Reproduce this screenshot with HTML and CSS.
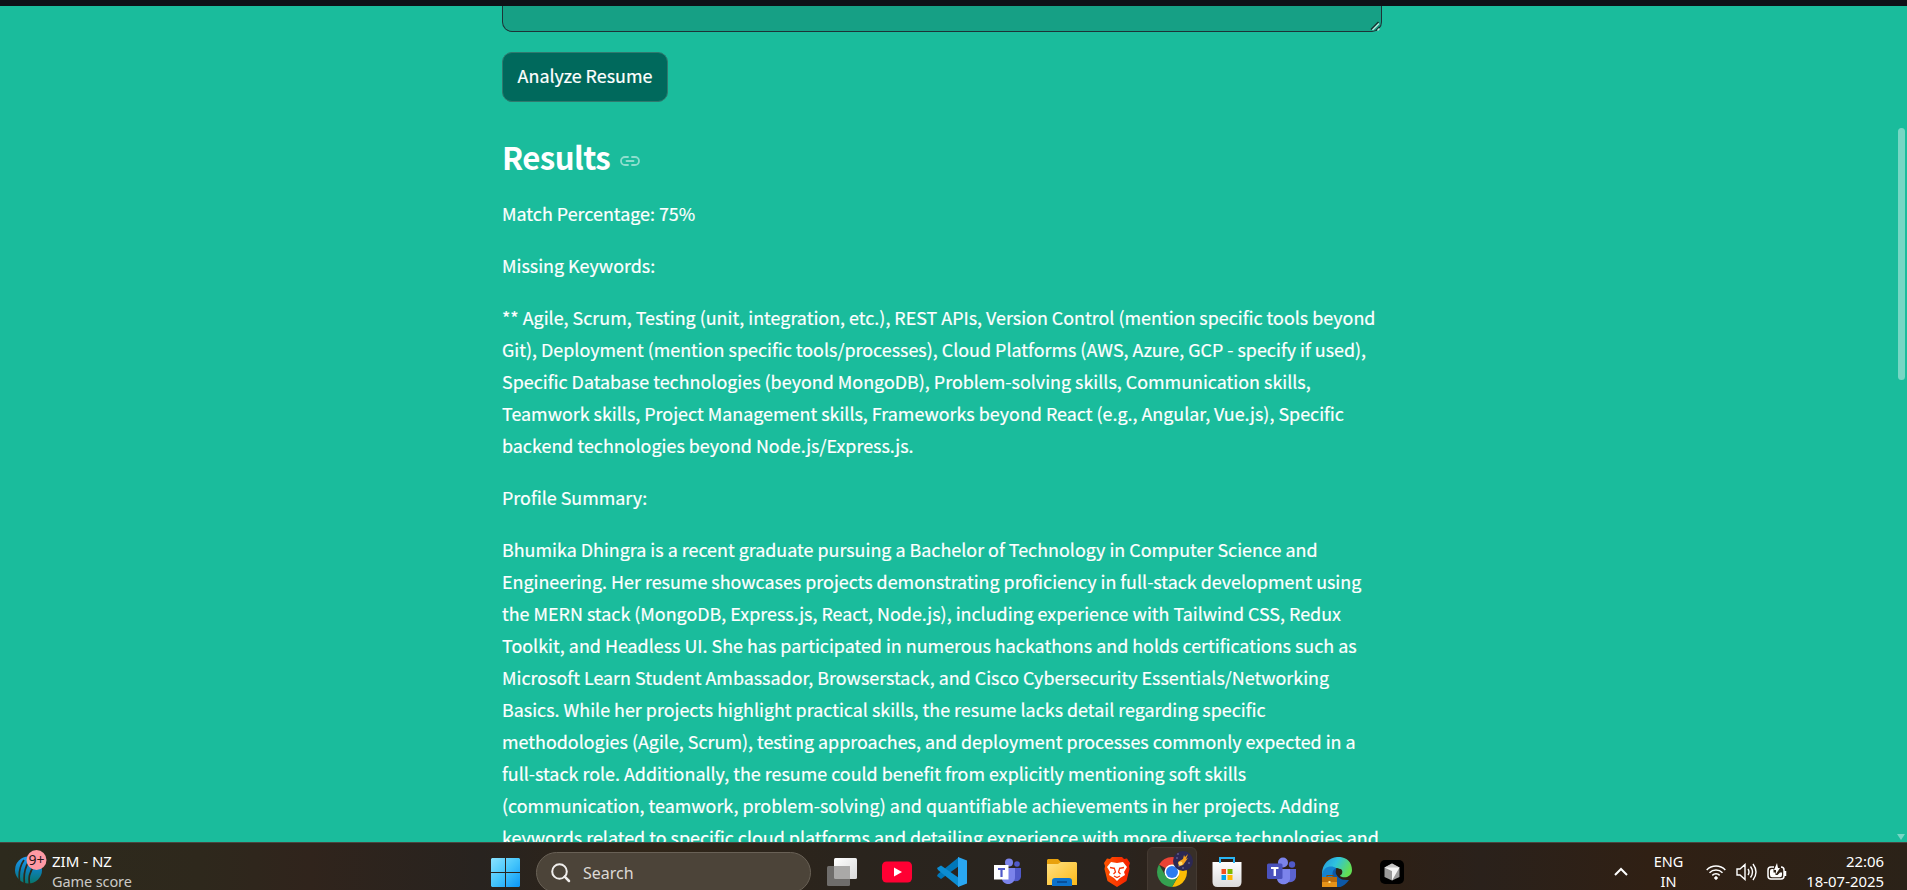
FILE: index.html
```html
<!DOCTYPE html>
<html lang="en">
<head>
<meta charset="utf-8">
<title>Resume Analyzer</title>
<link rel="stylesheet" href="styles.css">
</head>
<body>
<div class="screen">
  <header class="app-header"></header>
  <main class="page">
    <div class="column">
      <div class="textarea">
        <svg class="grip" width="10" height="10" viewBox="0 0 10 10"><path d="M1 8.5 8.5 1M6 9.5 9.5 6" stroke="#16302f" stroke-width="1.5"/><path d="M2.5 9 9 2.5M7.5 9.5 9.5 7.5" stroke="#b5e3d8" stroke-width="1.5"/></svg>
      </div>
      <button class="analyze">Analyze Resume</button>
      <h2 class="heading"><span>Results</span>
        <svg width="20" height="10" viewBox="0 0 20 10" fill="none" stroke="#8edecd" stroke-width="1.8" stroke-linecap="round"><path d="M8 1H5a4 4 0 0 0 0 8h3M12 1h3a4 4 0 0 1 0 8h-3M6.500 5h7"/></svg>
      </h2>
      <div class="prose">
        <p>Match Percentage: 75%</p>
        <p>Missing Keywords:</p>
        <p>** Agile, Scrum, Testing (unit, integration, etc.), REST APIs, Version Control (mention specific tools beyond<br>Git), Deployment (mention specific tools/processes), Cloud Platforms (AWS, Azure, GCP - specify if used),<br>Specific Database technologies (beyond MongoDB), Problem-solving skills, Communication skills,<br>Teamwork skills, Project Management skills, Frameworks beyond React (e.g., Angular, Vue.js), Specific<br>backend technologies beyond Node.js/Express.js.</p>
        <p>Profile Summary:</p>
        <p>Bhumika Dhingra is a recent graduate pursuing a Bachelor of Technology in Computer Science and<br>Engineering. Her resume showcases projects demonstrating proficiency in full-stack development using<br>the MERN stack (MongoDB, Express.js, React, Node.js), including experience with Tailwind CSS, Redux<br>Toolkit, and Headless UI. She has participated in numerous hackathons and holds certifications such as<br>Microsoft Learn Student Ambassador, Browserstack, and Cisco Cybersecurity Essentials/Networking<br>Basics. While her projects highlight practical skills, the resume lacks detail regarding specific<br>methodologies (Agile, Scrum), testing approaches, and deployment processes commonly expected in a<br>full-stack role. Additionally, the resume could benefit from explicitly mentioning soft skills<br>(communication, teamwork, problem-solving) and quantifiable achievements in her projects. Adding<br>keywords related to specific cloud platforms and detailing experience with more diverse technologies and</p>
      </div>
    </div>
    <div class="scroll-thumb"></div>
    <div class="scroll-down"></div>
  </main>

  <footer class="taskbar">
    <div class="widget">
      <svg width="34" height="38" viewBox="0 0 34 38">
        <defs><linearGradient id="ball" x1="0" y1="0" x2="0" y2="1"><stop offset="0" stop-color="#1e9bf0"/><stop offset=".5" stop-color="#0d80b8"/><stop offset="1" stop-color="#08766a"/></linearGradient></defs>
        <circle cx="14.500" cy="21" r="13.500" fill="url(#ball)"/>
        <path d="M10 11C5 18 4 25 6 36M15 12c-5 8-6 16-4 26M21 16c-6 7-7 13-5 22" fill="none" stroke="#2d2a1d" stroke-width="1.700"/>
        <circle cx="22.500" cy="11" r="10" fill="#ff99a4"/>
        <text class="badge-text" x="22.500" y="16" text-anchor="middle">9+</text>
      </svg>
      <div class="widget-text"><span>ZIM - NZ</span><span class="dim">Game score</span></div>
    </div>

    <div class="start">
      <svg width="29" height="29" viewBox="0 0 29 29">
        <defs><linearGradient id="win" gradientUnits="userSpaceOnUse" x1="0" y1="0" x2="29" y2="29"><stop offset="0" stop-color="#8be2ff"/><stop offset=".5" stop-color="#45c5fb"/><stop offset="1" stop-color="#0a96f8"/></linearGradient></defs>
        <path fill="url(#win)" d="M1 0h13v14H0V1zM15 0h13l1 1v13H15zM0 15h14v14H1l-1-1zM15 15h14v13l-1 1H15z"/>
      </svg>
    </div>

    <div class="search">
      <svg width="20" height="20" viewBox="0 0 20 20" fill="none" stroke="#f0eeec" stroke-width="2"><circle cx="8.500" cy="8.500" r="7.300"/><path d="m13.700 13.700 4.300 4.300" stroke-width="2.500" stroke-linecap="round"/></svg>
      <span>Search</span>
    </div>

    <div class="apps">
      <div class="app"><svg width="30" height="30" viewBox="0 0 30 30"><defs><linearGradient id="tv" x1="0" y1="0" x2="1" y2="1"><stop stop-color="#fff"/><stop offset="1" stop-color="#d9d9d9"/></linearGradient></defs><rect x="7" y="1" width="23" height="21" rx="1.500" fill="url(#tv)"/><rect x="0" y="9" width="23" height="20" rx="1.500" fill="#6f6d6b"/><path d="M7 9h15q1 0 1 1v12H8.500Q7 22 7 20.500z" fill="#aaa9a8"/></svg></div>
      <div class="app"><svg width="30" height="30" viewBox="0 0 30 30"><rect y="4.500" width="30" height="21" rx="4.500" fill="#ff0033"/><path d="m12 10.500 8 4.500-8 4.500z" fill="#fff"/></svg></div>
      <div class="app"><svg width="30" height="30" viewBox="0 0 30 30"><path d="M22 0v9L4 22l-4-3 1-2z" fill="#0077b9"/><path d="M22 30v-9L4 8.500 0 11l1 2z" fill="#0c8dd2"/><path d="m21 0 9 3.500v23L21 30z" fill="#2aa7f2"/></svg></div>
      <div class="app"><svg width="28" height="28" viewBox="0 0 28 28"><circle cx="24" cy="6" r="2.800" fill="#5059c9"/><path d="M19 10h9v9q-1 5-7 4z" fill="#5059c9"/><circle cx="16" cy="4.500" r="4" fill="#7b83eb"/><path d="M10 10h12v9c0 9-12 9-13 2z" fill="#7b83eb"/><rect x="1" y="7" width="14.500" height="14.500" fill="#fff"/><path d="M5 10h7v2H9.600v7H7.400v-7H5z" fill="#5059c9"/></svg></div>
      <div class="app"><svg width="30" height="28" viewBox="0 0 30 28"><defs><linearGradient id="fold" x1="0" y1="0" x2="1" y2="1"><stop stop-color="#ffe183"/><stop offset="1" stop-color="#fcb918"/></linearGradient></defs><path d="M1 1h10l3 3h15v9H0V2z" fill="#e8a10d"/><path d="M0 6h11l3-2h15l1 1v22H0z" fill="url(#fold)"/><path d="M5 28v-5q0-3 3-3h14q3 0 3 3v5z" fill="#0c72cc"/><path d="M10 24h10" stroke="#06448a" stroke-width="1.500"/></svg></div>
      <div class="app"><svg width="26" height="30" viewBox="0 0 26 30"><defs><linearGradient id="brave" x1="0" y1="0" x2="1" y2="0"><stop stop-color="#ff5500"/><stop offset="1" stop-color="#f51d00"/></linearGradient></defs><path d="M8 0h10l2 2 3-.5L26 6l-1 3 .5 3-3 12-9.500 6-9.500-6L.5 12 1 9 0 6l3-4.500L6 2z" fill="url(#brave)"/><path d="m7 5 6 1 6-1 4 5-3 5 1 3-5 3-3 3-3-3-5-3 1-3-3-5z" fill="#fff"/><path d="m6 10.500 5 1M20 10.500l-5 1M10.500 12l1 3-2 2M15.500 12l-1 3 2 2M10 19l3 1.500 3-1.500" fill="none" stroke="#fa3608" stroke-width="1.300"/></svg></div>
      <div class="app active"><svg class="chrome" width="36" height="36" viewBox="0 0 36 36"><path d="M15 21 2.010 13.500A15 15 0 0 1 27.990 13.500L15 13.500z" fill="#ea4335"/><path d="M27.990 13.500A15 15 0 0 1 15 36L21.500 24.750 15 13.500z" fill="#fbbc04"/><path d="M2.010 13.500A15 15 0 0 0 15 36L21.500 24.750 15 28.500 8.500 24.750z" fill="#34a050"/><circle cx="15" cy="21" r="7.500" fill="#fff"/><circle cx="15" cy="21" r="6" fill="#2d7cf0"/><circle cx="26" cy="10" r="10" fill="#2c2853"/><path d="M19 7h2M21 15h2M31 12h2M20 3h2M25 17h2" stroke="#7771a2"/><path d="m22 15-1-4 5-3 1-4 1 2 3-3-2 5 2-1-5 7z" fill="#f5a11a"/><circle cx="23.500" cy="12.500" r="2" fill="#ffdc70"/></svg></div>
      <div class="app"><svg width="30" height="30" viewBox="0 0 30 30"><defs><linearGradient id="bag" x1="0" y1="0" x2="0" y2="1"><stop stop-color="#fff"/><stop offset="1" stop-color="#dcdcdc"/></linearGradient></defs><path d="M.5 5h29v20q0 5-5 5h-19q-5 0-5-5z" fill="url(#bag)"/><path d="M8 6V1h14v5" fill="none" stroke="#29b5f4" stroke-width="2"/><path d="M9.500 12H14v5H9.500z" fill="#f25022"/><path d="M15.500 12h5v5h-5z" fill="#7fba00"/><path d="M9.500 18H14v5H9.500z" fill="#00a4ef"/><path d="M15.500 18h5v5h-5z" fill="#ffb900"/></svg></div>
      <div class="app"><svg width="30" height="30" viewBox="0 0 30 30"><circle cx="25" cy="7.500" r="3.200" fill="#5059c9"/><path d="M20 12h9v8q-1 6-8 5z" fill="#5b63cf"/><circle cx="16" cy="5.500" r="5" fill="#7b83eb"/><path d="M12 12h11v10c-1 7-12 7-13 0z" fill="#7b83eb"/><rect x="0" y="6.500" width="15.500" height="15.500" rx="1.500" fill="#4a52bd"/><path d="M4 10h7.500v2H9v7H6.600v-7H4z" fill="#fff"/></svg></div>
      <div class="app"><svg width="30" height="30" viewBox="0 0 30 30"><defs><linearGradient id="edge" x1="0" y1="0" x2="1" y2=".4"><stop stop-color="#2394dc"/><stop offset=".5" stop-color="#2fc2df"/><stop offset="1" stop-color="#62de54"/></linearGradient></defs><path d="M15 8c-3 10 1 16 12 15C17 37 0 31 0 15z" fill="#0d58a6"/><path d="M0 17C0-4 30-6 30 13c0 7-8 9-12 6 3-4 0-8-4-8C7 10 0 14 0 20z" fill="url(#edge)"/><path d="M0 18c1-9 10-10 14-7-5 3-4 8-1 11L0 25z" fill="#1482cf"/><rect x="5" y="18.500" width="6" height="3" fill="none" stroke="#8e4900"/><path d="M0 20h15v10H0z" fill="#e69319"/><path d="M0 20h15v5H0z" fill="#b96a0b"/><path d="M6.500 24h2v2h-2z" fill="#ffe38c"/><circle cx="17" cy="15" r="3.300" fill="#2e2015"/></svg></div>
      <div class="app"><svg width="24" height="24" viewBox="0 0 24 24"><rect width="24" height="24" rx="5" fill="#000"/><path d="m12 3.500 7.500 4v9.500L12 20.500 4.500 17V7.500z" fill="#999"/><path d="m12 3.500 7.500 4L12 11 4.500 7.500z" fill="#c4c4c4"/><path d="M19.500 7.500 12 20.500V11L4.500 7.500z" fill="#f4f4f4"/></svg></div>
    </div>

    <div class="tray">
      <svg class="chevron" width="14" height="9" viewBox="0 0 14 9" fill="none" stroke="#fff" stroke-width="2"><path d="m1 8 6-6 6 6"/></svg>
      <div class="lang"><span>ENG</span><span>IN</span></div>
      <div class="status">
        <svg width="20" height="16" viewBox="0 0 20 16" fill="none" stroke="#fff" stroke-width="1.500"><path d="M.700 6a13 13 0 0 1 18.600 0M3.500 8.700a9.200 9.200 0 0 1 13 0M6.300 11.400a5.200 5.200 0 0 1 7.400 0"/><circle cx="10" cy="14" r="1.300" fill="#fff" stroke-width="1"/></svg>
        <svg width="21" height="18" viewBox="0 0 21 18" fill="none" stroke="#fff" stroke-width="1.400"><path d="M1 6h3l5-4.500v15L4 12H1zM12 6q2 3 0 6M14.500 3.500q4 5.500 0 11M17 1q6 8 0 16"/></svg>
        <svg width="20" height="18" viewBox="0 0 20 18" fill="none" stroke="#fff" stroke-width="1.500"><path d="M7 4H4Q1 4 1 7v6q0 3 3 3h10q3 0 3-3V7q0-3-3-3M18.500 8v5"/><path d="M3 8q0-2 2-2h1.500v3.500h2V12h2l2.500-2.500h2V12q0 2.200-2 2.200H5q-2 0-2-2.200z" fill="#fff" stroke="none"/><path d="M10 0 7 7h2v4l4-6h-2z" fill="#fff" stroke="none"/></svg>
      </div>
      <div class="clock"><span>22:06</span><span>18-07-2025</span></div>
    </div>
  </footer>
</div>
</body>
</html>
```
FILE: styles.css
```css
* { box-sizing: border-box; }
body { margin: 0; overflow: hidden; }
svg { display: block; flex: none; }

.screen {
  width: 1907px;
  height: 890px;
  display: flex;
  flex-direction: column;
  overflow: hidden;
}

.app-header { height: 6px; flex: none; background: #0e1117; }

.page {
  position: relative;
  height: 836px;
  flex: none;
  overflow: hidden;
  padding-left: 502px;
  background: #1abc9c;
  color: #fff;
  font-family: "Noto Sans CJK SC", "Noto Sans", sans-serif;
}
.column { width: 880px; }

.textarea {
  position: relative;
  height: 26px;
  border: 1px solid #1d3337;
  border-top: 0;
  border-radius: 0 0 10px 10px;
  background: #16a085;
}
.grip { position: absolute; right: 1px; bottom: 0; }

.analyze {
  display: block;
  width: 166px;
  height: 50px;
  margin-top: 20px;
  padding: 0 0 4px;
  border: 1px solid #31796e;
  border-radius: 10px;
  background: #00695c;
  color: #fff;
  font: 400 17.900px/30px "Noto Sans CJK SC", "Noto Sans", sans-serif;
  -webkit-text-stroke: 0.200px #fff;
  white-space: nowrap;
}

.heading {
  display: flex;
  align-items: center;
  gap: 9.500px;
  height: 42px;
  margin: 34px 0 0;
  font-size: 31.200px;
  font-weight: 700;
  letter-spacing: -0.600px;
  line-height: 42px;
}
.heading svg { margin-top: 8px; }

.prose { margin-top: 19px; font-size: 17.900px; line-height: 32px; white-space: nowrap; -webkit-text-stroke: 0.200px #fff; }
.prose p { margin: 0 0 20px; }

.scroll-thumb {
  position: absolute;
  left: 1898px;
  top: 122px;
  width: 7px;
  height: 252px;
  border-radius: 4px;
  background: #76d7c4;
}
.scroll-down {
  position: absolute;
  left: 1897px;
  top: 828px;
  border: 4.500px solid transparent;
  border-top: 6px solid #76d7c4;
  border-bottom: 0;
}

.taskbar {
  position: relative;
  display: flex;
  height: 48px;
  flex: none;
  overflow: hidden;
  border-top: 1px solid #4a4640;
  background: linear-gradient(90deg, #2d2a1d 0, #2e281c 200px, #30241c 310px, #28231f 480px, #302518 650px, #2a241d 850px, #29241f 1110px, #302015 1230px, #2e2015 1380px, #2a211b 1480px, #302014 1650px, #2b2218 1907px);
  color: #fff;
  font-family: "Noto Sans", sans-serif;
  font-size: 15px;
  line-height: 20px;
}

.widget { display: flex; width: 490px; padding: 6px 0 0 14px; gap: 4px; }
.badge-text { font-size: 14px; fill: #2a1517; }
.widget-text { display: flex; flex-direction: column; padding-top: 2px; white-space: nowrap; }
.dim { color: #cbc9c6; font-size: 14.500px; letter-spacing: -0.100px; }

.start { width: 46px; padding: 15px 0 0 1px; }

.search {
  display: flex;
  align-items: center;
  gap: 12px;
  width: 275px;
  height: 41px;
  margin-top: 9px;
  padding-left: 14px;
  flex: none;
  border: 1px solid #696156;
  border-radius: 21px;
  background: #4c4439;
  color: #dcd9d5;
  font-size: 16px;
}

.apps { display: flex; width: 605px; height: 50px; margin: 4px 0 0 3.500px; flex: none; }
.app { width: 55px; height: 50px; display: flex; flex: none; align-items: center; justify-content: center; }
.active { width: 50px; margin: 0 2.500px; border: 1px solid #443a32; border-radius: 6px; background: #382f28; }
.chrome { margin: -6px 0 0 6px; }

.tray { display: flex; flex: 1; white-space: nowrap; }
.chevron { margin: 24px 0 0 194px; }
.lang { display: flex; flex-direction: column; align-items: center; width: 30px; margin: 8px 0 0 26px; font-size: 14.500px; }
.status { display: flex; align-items: center; gap: 10px; height: 22px; margin: 18px 0 0 22px; }
.clock { display: flex; flex-direction: column; align-items: flex-end; margin: 8px 23px 0 auto; font-size: 14.900px; }
```
